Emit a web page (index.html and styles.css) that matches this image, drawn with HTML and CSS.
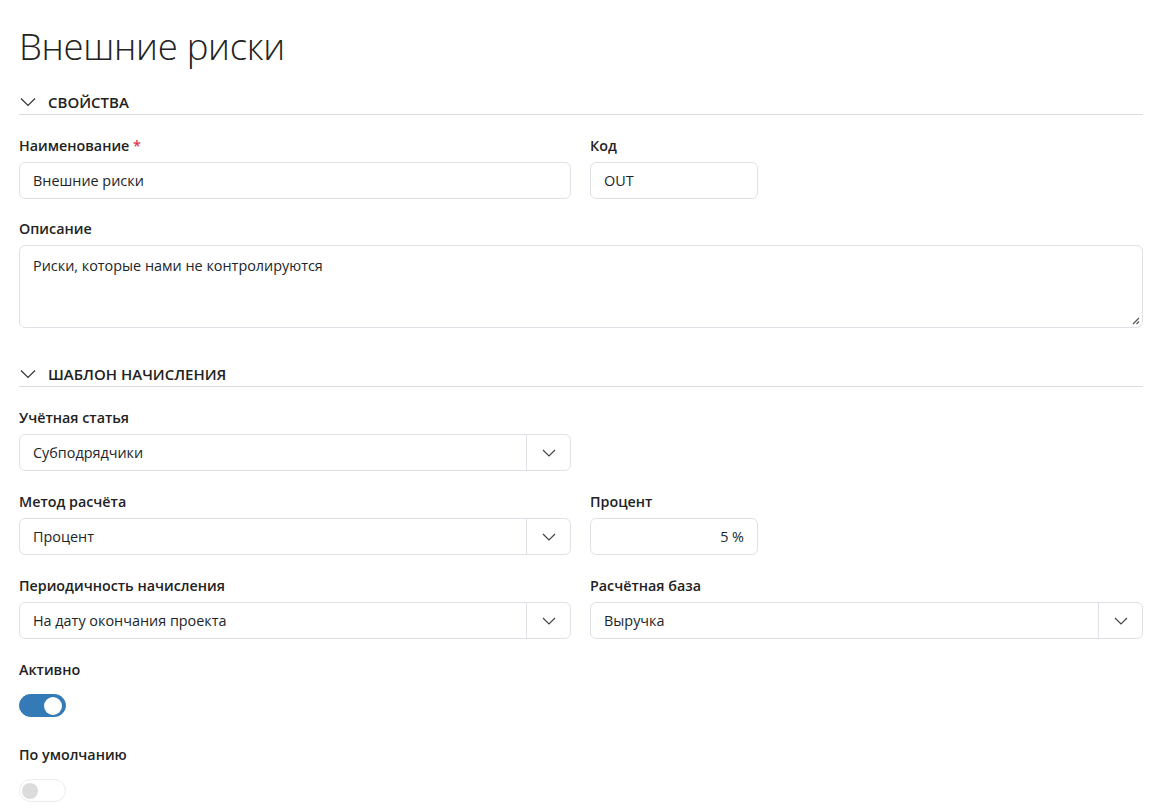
FILE: index.html
```
<!DOCTYPE html>
<html lang="ru">
<head>
<meta charset="utf-8">
<link rel="stylesheet" href="styles.css">
</head>
<body>
<div class="page">
  <h1 class="title">Внешние риски</h1>

  <div class="section-head">
    <svg class="chev" width="16" height="10" viewBox="0 0 16 10"><path d="M1 1.5 L8 8.5 L15 1.5" fill="none" stroke="#333" stroke-width="1.2"/></svg>
    <span>СВОЙСТВА</span>
  </div>

  <div class="row">
    <div class="field col-half">
      <label class="lbl">Наименование <span class="req">*</span></label>
      <div class="input">Внешние риски</div>
    </div>
    <div class="field col-code">
      <label class="lbl">Код</label>
      <div class="input">OUT</div>
    </div>
  </div>

  <div class="field field-desc">
    <label class="lbl">Описание</label>
    <div class="textarea">Риски, которые нами не контролируются
      <svg class="grip" width="9" height="9" viewBox="0 0 9 9"><path d="M8 2 L2 8 M8 5.5 L5.5 8" stroke="#555" stroke-width="1.2"/></svg>
    </div>
  </div>

  <div class="section-head sec2">
    <svg class="chev" width="16" height="10" viewBox="0 0 16 10"><path d="M1 1.5 L8 8.5 L15 1.5" fill="none" stroke="#333" stroke-width="1.2"/></svg>
    <span>ШАБЛОН НАЧИСЛЕНИЯ</span>
  </div>

  <div class="row">
    <div class="field col-half">
      <label class="lbl">Учётная статья</label>
      <div class="select"><span class="val">Субподрядчики</span><span class="btn"><svg width="14" height="8" viewBox="0 0 14 8"><path d="M1 1 L7 7 L13 1" fill="none" stroke="#444" stroke-width="1.2"/></svg></span></div>
    </div>
  </div>

  <div class="row">
    <div class="field col-half">
      <label class="lbl">Метод расчёта</label>
      <div class="select"><span class="val">Процент</span><span class="btn"><svg width="14" height="8" viewBox="0 0 14 8"><path d="M1 1 L7 7 L13 1" fill="none" stroke="#444" stroke-width="1.2"/></svg></span></div>
    </div>
    <div class="field col-code">
      <label class="lbl">Процент</label>
      <div class="input right">5 %</div>
    </div>
  </div>

  <div class="row">
    <div class="field col-half">
      <label class="lbl">Периодичность начисления</label>
      <div class="select"><span class="val">На дату окончания проекта</span><span class="btn"><svg width="14" height="8" viewBox="0 0 14 8"><path d="M1 1 L7 7 L13 1" fill="none" stroke="#444" stroke-width="1.2"/></svg></span></div>
    </div>
    <div class="field col-half">
      <label class="lbl">Расчётная база</label>
      <div class="select"><span class="val">Выручка</span><span class="btn"><svg width="14" height="8" viewBox="0 0 14 8"><path d="M1 1 L7 7 L13 1" fill="none" stroke="#444" stroke-width="1.2"/></svg></span></div>
    </div>
  </div>

  <div class="field">
    <label class="lbl">Активно</label>
    <div class="toggle on"><span class="knob"></span></div>
  </div>

  <div class="field">
    <label class="lbl">По умолчанию</label>
    <div class="toggle"><span class="knob"></span></div>
  </div>
</div>
</body>
</html>
```

FILE: styles.css
```
* { box-sizing: border-box; }
html, body { margin: 0; padding: 0; background: #fff; }
body {
  font-family: "Open Sans", "Noto Sans", sans-serif;
  color: #212529;
  font-size: 14px;
}
.page {
  padding: 20px 27px 0 19px;
  display: flex;
  flex-direction: column;
}
.title {
  margin: 0;
  font-weight: 300;
  font-size: 36.5px;
  line-height: 52px;
  color: #222;
  letter-spacing: -0.3px;
}
.section-head {
  display: flex;
  align-items: center;
  gap: 12px;
  margin-top: 17px;
  padding: 0 0 0 1px;
  border-bottom: 1px solid #dcdcdc;
  font-weight: 600;
  font-size: 15px;
  color: #222;
  height: 26px;
}
.sec2 { margin-top: 33px; }
.chev { display: block; }
.row {
  display: flex;
  gap: 19px;
}
.field {
  display: flex;
  flex-direction: column;
  margin-top: 21px;
}
.field-desc { margin-top: 20px; }
.col-half { flex: 0 0 552px; }
.col-half + .col-half { flex: 1 1 auto; }
.col-code { flex: 0 0 168px; }
.lbl {
  font-weight: 600;
  font-size: 14.3px;
  line-height: 20px;
  color: #222;
  margin-bottom: 6px;
}
.req { color: #dc3545; font-weight: 600; }
.input {
  height: 37px;
  border: 1px solid #dee2e6;
  border-radius: 6px;
  padding: 0 13px;
  display: flex;
  align-items: center;
  font-size: 14.4px;
  color: #212529;
}
.input.right { justify-content: flex-end; }
.textarea {
  position: relative;
  height: 83px;
  border: 1px solid #dee2e6;
  border-radius: 6px;
  padding: 10px 13px;
  font-size: 14.4px;
}
.grip { position: absolute; right: 2px; bottom: 2px; }
.select {
  height: 37px;
  border: 1px solid #dee2e6;
  border-radius: 6px;
  display: flex;
  align-items: stretch;
  font-size: 14.4px;
}
.select .val {
  flex: 1;
  display: flex;
  align-items: center;
  padding: 0 13px;
}
.select .btn {
  width: 44px;
  border-left: 1px solid #dee2e6;
  display: flex;
  align-items: center;
  justify-content: center;
}
.toggle {
  margin-top: 8px;
  margin-bottom: 7px;
  width: 47px;
  height: 23px;
  border-radius: 12px;
  border: 1px solid #ececec;
  background: #fff;
  position: relative;
}
.toggle .knob {
  position: absolute;
  top: 2.5px;
  left: 2px;
  width: 16px;
  height: 16px;
  border-radius: 50%;
  background: #dcdcdc;
}
.toggle.on {
  background: #337ab7;
  border-color: #337ab7;
}
.toggle.on .knob {
  left: auto;
  right: 3px;
  top: 1.5px;
  width: 18px;
  height: 18px;
  background: #fff;
}
```
